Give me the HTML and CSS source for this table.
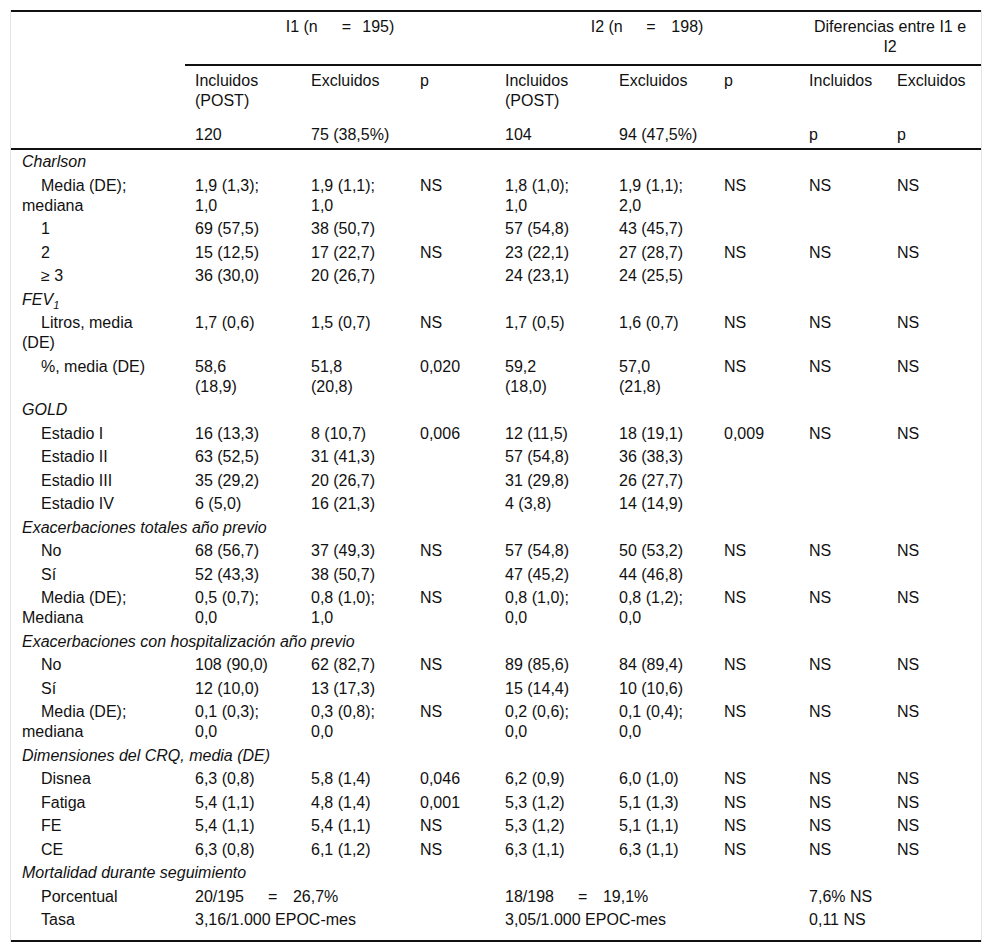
FILE: index.html
```html
<!DOCTYPE html>
<html lang="es">
<head>
<meta charset="utf-8">
<title>Tabla</title>
<link rel="stylesheet" href="styles.css">
</head>
<body>
<div class="frame">
<table class="data">
<colgroup>
<col class="c-label"><col class="c1"><col class="c2"><col class="c3"><col class="c4"><col class="c5"><col class="c6"><col class="c7"><col class="c8">
</colgroup>
<thead>
<tr class="h1">
<th rowspan="3" class="corner"></th>
<th colspan="3" class="group">I1 (n&emsp;&ensp;=&ensp;&thinsp;195)</th>
<th colspan="3" class="group">I2 (n&emsp;&nbsp;&thinsp;=&ensp;&nbsp;&thinsp;198)</th>
<th colspan="2" class="group">Diferencias entre I1 e I2</th>
</tr>
<tr class="h2">
<th>Incluidos<br>(POST)</th><th>Excluidos</th><th>p</th>
<th>Incluidos<br>(POST)</th><th>Excluidos</th><th>p</th>
<th>Incluidos</th><th>Excluidos</th>
</tr>
<tr class="h3">
<th>120</th><th>75 (38,5%)</th><th></th>
<th>104</th><th>94 (47,5%)</th><th></th>
<th>p</th><th>p</th>
</tr>
</thead>
<tbody>
<tr><td colspan="9" class="sec">Charlson</td></tr>
<tr><td class="lbl">Media (DE);<br>mediana</td><td>1,9 (1,3);<br>1,0</td><td>1,9 (1,1);<br>1,0</td><td>NS</td><td>1,8 (1,0);<br>1,0</td><td>1,9 (1,1);<br>2,0</td><td>NS</td><td>NS</td><td>NS</td></tr>
<tr><td class="lbl">1</td><td>69 (57,5)</td><td>38 (50,7)</td><td></td><td>57 (54,8)</td><td>43 (45,7)</td><td></td><td></td><td></td></tr>
<tr><td class="lbl">2</td><td>15 (12,5)</td><td>17 (22,7)</td><td>NS</td><td>23 (22,1)</td><td>27 (28,7)</td><td>NS</td><td>NS</td><td>NS</td></tr>
<tr><td class="lbl">≥ 3</td><td>36 (30,0)</td><td>20 (26,7)</td><td></td><td>24 (23,1)</td><td>24 (25,5)</td><td></td><td></td><td></td></tr>
<tr><td colspan="9" class="sec">FEV<sub>1</sub></td></tr>
<tr><td class="lbl">Litros, media<br>(DE)</td><td>1,7 (0,6)</td><td>1,5 (0,7)</td><td>NS</td><td>1,7 (0,5)</td><td>1,6 (0,7)</td><td>NS</td><td>NS</td><td>NS</td></tr>
<tr><td class="lbl">%, media (DE)</td><td>58,6<br>(18,9)</td><td>51,8<br>(20,8)</td><td>0,020</td><td>59,2<br>(18,0)</td><td>57,0<br>(21,8)</td><td>NS</td><td>NS</td><td>NS</td></tr>
<tr><td colspan="9" class="sec">GOLD</td></tr>
<tr><td class="lbl">Estadio I</td><td>16 (13,3)</td><td>8 (10,7)</td><td>0,006</td><td>12 (11,5)</td><td>18 (19,1)</td><td>0,009</td><td>NS</td><td>NS</td></tr>
<tr><td class="lbl">Estadio II</td><td>63 (52,5)</td><td>31 (41,3)</td><td></td><td>57 (54,8)</td><td>36 (38,3)</td><td></td><td></td><td></td></tr>
<tr><td class="lbl">Estadio III</td><td>35 (29,2)</td><td>20 (26,7)</td><td></td><td>31 (29,8)</td><td>26 (27,7)</td><td></td><td></td><td></td></tr>
<tr><td class="lbl">Estadio IV</td><td>6 (5,0)</td><td>16 (21,3)</td><td></td><td>4 (3,8)</td><td>14 (14,9)</td><td></td><td></td><td></td></tr>
<tr><td colspan="9" class="sec">Exacerbaciones totales año previo</td></tr>
<tr><td class="lbl">No</td><td>68 (56,7)</td><td>37 (49,3)</td><td>NS</td><td>57 (54,8)</td><td>50 (53,2)</td><td>NS</td><td>NS</td><td>NS</td></tr>
<tr><td class="lbl">Sí</td><td>52 (43,3)</td><td>38 (50,7)</td><td></td><td>47 (45,2)</td><td>44 (46,8)</td><td></td><td></td><td></td></tr>
<tr><td class="lbl">Media (DE);<br>Mediana</td><td>0,5 (0,7);<br>0,0</td><td>0,8 (1,0);<br>1,0</td><td>NS</td><td>0,8 (1,0);<br>0,0</td><td>0,8 (1,2);<br>0,0</td><td>NS</td><td>NS</td><td>NS</td></tr>
<tr><td colspan="9" class="sec">Exacerbaciones con hospitalización año previo</td></tr>
<tr><td class="lbl">No</td><td>108 (90,0)</td><td>62 (82,7)</td><td>NS</td><td>89 (85,6)</td><td>84 (89,4)</td><td>NS</td><td>NS</td><td>NS</td></tr>
<tr><td class="lbl">Sí</td><td>12 (10,0)</td><td>13 (17,3)</td><td></td><td>15 (14,4)</td><td>10 (10,6)</td><td></td><td></td><td></td></tr>
<tr><td class="lbl">Media (DE);<br>mediana</td><td>0,1 (0,3);<br>0,0</td><td>0,3 (0,8);<br>0,0</td><td>NS</td><td>0,2 (0,6);<br>0,0</td><td>0,1 (0,4);<br>0,0</td><td>NS</td><td>NS</td><td>NS</td></tr>
<tr><td colspan="9" class="sec">Dimensiones del CRQ, media (DE)</td></tr>
<tr><td class="lbl">Disnea</td><td>6,3 (0,8)</td><td>5,8 (1,4)</td><td>0,046</td><td>6,2 (0,9)</td><td>6,0 (1,0)</td><td>NS</td><td>NS</td><td>NS</td></tr>
<tr><td class="lbl">Fatiga</td><td>5,4 (1,1)</td><td>4,8 (1,4)</td><td>0,001</td><td>5,3 (1,2)</td><td>5,1 (1,3)</td><td>NS</td><td>NS</td><td>NS</td></tr>
<tr><td class="lbl">FE</td><td>5,4 (1,1)</td><td>5,4 (1,1)</td><td>NS</td><td>5,3 (1,2)</td><td>5,1 (1,1)</td><td>NS</td><td>NS</td><td>NS</td></tr>
<tr><td class="lbl">CE</td><td>6,3 (0,8)</td><td>6,1 (1,2)</td><td>NS</td><td>6,3 (1,1)</td><td>6,3 (1,1)</td><td>NS</td><td>NS</td><td>NS</td></tr>
<tr><td colspan="9" class="sec">Mortalidad durante seguimiento</td></tr>
<tr><td class="lbl">Porcentual</td><td colspan="3">20/195&emsp;&ensp;=&ensp;&nbsp;&thinsp;26,7%</td><td colspan="3">18/198&emsp;&ensp;=&ensp;&nbsp;&thinsp;19,1%</td><td colspan="2">7,6% NS</td></tr>
<tr class="last"><td class="lbl">Tasa</td><td colspan="3">3,16/1.000 EPOC-mes</td><td colspan="3">3,05/1.000 EPOC-mes</td><td colspan="2">0,11 NS</td></tr>
</tbody>
</table>
</div>
</body>
</html>
```
FILE: styles.css
```css
html, body {
  margin: 0;
  background: #fff;
}
body {
  padding: 10px 10px 0 10px;
  font-family: "Liberation Sans", Arial, Helvetica, sans-serif;
  font-size: 16px;
  color: #111;
}
.frame {
  border-left: 1px solid #e4e4e4;
  border-right: 1px solid #e4e4e4;
}
.data {
  width: 970px;
  table-layout: fixed;
  border-collapse: separate;
  border-spacing: 0;
  border-top: 2px solid #111;
  border-bottom: 2px solid #111;
}
.c-label { width: 174px; }
.c1 { width: 116px; }
.c2 { width: 109px; }
.c3 { width: 85px; }
.c4 { width: 114px; }
.c5 { width: 105px; }
.c6 { width: 85px; }
.c7 { width: 88px; }
.c8 { width: 94px; }

th, td {
  text-align: left;
  vertical-align: top;
  font-weight: normal;
  line-height: 20px;
  padding: 2px 10px 1.5px 10px;
}
thead th {
  padding: 5px 10px 5px 10px;
}
thead .h1 th.group {
  text-align: center;
  padding: 5px 10px 7px 10px;
  border-bottom: 2px solid #111;
}
thead th.corner {
  border-bottom: 2px solid #111;
}
thead .h3 th {
  padding: 9px 10px 3px 10px;
  border-bottom: 2px solid #111;
}
td.sec {
  font-style: italic;
  padding-left: 11px;
}
td.sec sub {
  font-size: 11px;
  line-height: 0;
  vertical-align: -4px;
}
td.lbl {
  padding-left: 11px;
  text-indent: 19px;
}
tr.last td {
  padding-bottom: 10px;
}
```
